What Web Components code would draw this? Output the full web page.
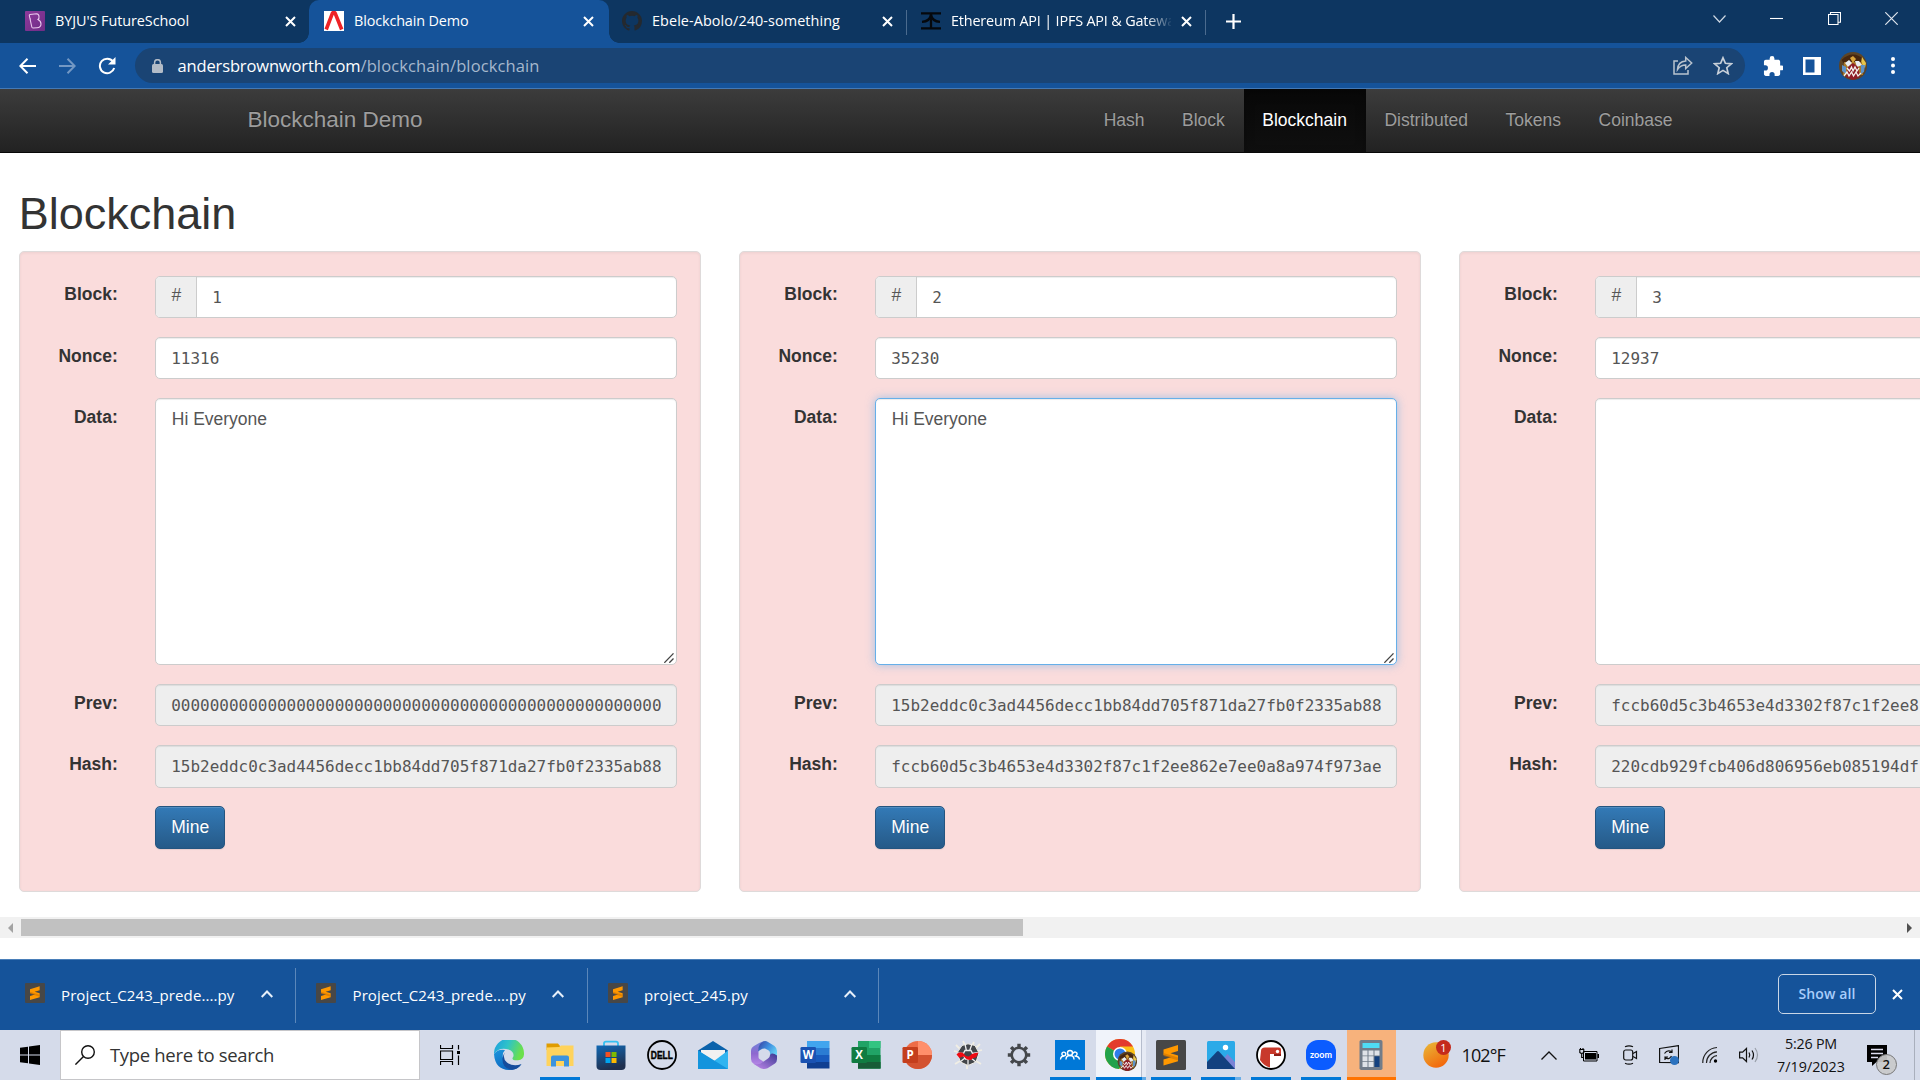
<!DOCTYPE html>
<html lang="en">
<head>
<meta charset="utf-8">
<title>Blockchain Demo</title>
<style>
html,body{margin:0;width:1920px;height:1080px;overflow:hidden;background:#fff}
body{font-family:"Liberation Sans",Arial,sans-serif;font-size:17.5px;color:#333}
</style>
</head>
<body>
<desktop-screen></desktop-screen>
<script>
const UI = '"Open Sans","Noto Sans",sans-serif';

function define(name, render) {
  customElements.define(name, class extends HTMLElement {
    connectedCallback() {
      if (this.shadowRoot) return;
      const root = this.attachShadow({ mode: 'open' });
      root.innerHTML = render(this);
    }
  });
}

/* Text run whose tracking is tuned so that it fills a given width. */
customElements.define('fit-text', class extends HTMLElement {
  connectedCallback() {
    if (this.shadowRoot) return;
    const root = this.attachShadow({ mode: 'open' });
    root.innerHTML = '<style>:host{display:block;white-space:nowrap;flex:none}span{display:inline-block}</style><span><slot></slot></span>';
    const w = parseFloat(this.getAttribute('w'));
    const span = root.querySelector('span');
    const n = this.textContent.length;
    if (w && n) {
      const natural = span.getBoundingClientRect().width;
      span.style.letterSpacing = ((w - natural) / n) + 'px';
      this.style.width = w + 'px';
    }
  }
});

const sublime = '<rect width="30" height="30" rx="1.5" fill="#474747"/><path d="M7.5 9.5 22 5v6l-7.500 2.300L22 15.500v5.800L7.500 25.500v-6l7.600-2.200-7.600-2.200z" fill="#ff9800"/><path d="M7.500 13 22 17.500v3L7.500 16z" fill="#c96f00" opacity=".55"/>';
const face = '<g><circle cx="14" cy="14" r="14" fill="#5d4426"/><path d="M2.500 8Q14-3 25.500 8l-2 3h-19z" fill="#46260f"/><path d="M23 5l4 6-1 5-4-5z" fill="#e8c64b"/><path d="M5 10h18l1 13H4z" fill="#a8792c"/><path d="M6 11l4-3 3 3-4 4zM16 9l4 0 3 4-5 2z" fill="#e9eef4"/><path d="M11 6l3-2 3 3-3 4z" fill="#d9a43b"/><path d="M3 13l4 2 0 7-4-3zM22 13l4 0-1 7-3 2z" fill="#5d93cc"/><path d="M9 15l5-4 5 4 2 10-7 3-7-3z" fill="#8e1d28"/><path d="M8 16l2.500 3 2-4 1.500 4 2-4 2 4 2-3M5 24l3-4 2 4 2.500-4 2 4 2.500-4 2 4 3-3" stroke="#f4f2ee" stroke-width="1.300" fill="none"/></g>';

/* name: [width, height, viewBox, markup] */
const ICONS = {
  byju:[20,20,'0 0 20 20','<defs><linearGradient id="a" x2="1" y2="1"><stop stop-color="#8d3a9b"/><stop offset="1" stop-color="#6f2c86"/></linearGradient></defs><rect width="20" height="20" rx="1" fill="url(#a)"/><path d="M4.300 4.500Q4.200 3.600 5 3.500L11.500 2.700Q14 3 14 5.500 14.300 7.500 13 8.500 16 10 16 13q0 3.500-4 3.700L8 17Q7 17 6.800 16zM6 8l-1 .2" fill="none" stroke="#e9c9ee" stroke-width="1.100"/>'],
  anders:[20,20,'0 0 20 20','<rect width="20" height="20" fill="#fff"/><path d="M2.200 18.500 8.300 2.500Q9.800.2 11.300 2.500L17.700 18.500" fill="none" stroke="#ee2226" stroke-width="3.600"/>'],
  github:[20,20,'0 0 16 16','<path fill="#24292f" d="M8 0C3.580 0 0 3.580 0 8c0 3.540 2.290 6.530 5.470 7.590.4.070.55-.17.55-.38 0-.19-.01-.82-.01-1.490-2.010.37-2.530-.49-2.690-.94-.09-.23-.48-.94-.82-1.130-.28-.15-.68-.52-.01-.53.63-.01 1.080.58 1.230.82.72 1.210 1.870.87 2.330.66.07-.52.28-.87.51-1.070-1.780-.2-3.640-.89-3.640-3.950 0-.87.31-1.590.82-2.150-.08-.2-.36-1.020.08-2.120 0 0 .67-.21 2.200.82a7.600 7.600 0 0 1 4 0c1.530-1.040 2.200-.82 2.200-.82.44 1.100.16 1.920.08 2.120.51.56.82 1.270.82 2.150 0 3.070-1.870 3.750-3.650 3.950.29.25.54.73.54 1.480 0 1.070-.01 1.930-.01 2.200 0 .21.15.46.55.38A8 8 0 0 0 16 8c0-4.420-3.580-8-8-8z"/>'],
  alchemy:[20,20,'0 0 20 20','<path d="M0 2.300h20M0 17.300h20M10 2.500V17M1 10.800Q9 10.500 10 3.500Q11 10.500 19 10.800" fill="none" stroke="#05080c" stroke-width="2.300"/>'],
  x:[11,11,'0 0 11 11','<path d="M1 1l9 9M10 1l-9 9" stroke="#fff" stroke-width="2"/>'],
  plus:[15,15,'0 0 15 15','<path d="M7.500 0v15M0 7.500h15" stroke="#fff" stroke-width="2.200"/>'],
  tabmenu:[13,8,'0 0 13 8','<path d="M.5.5l6 6.500 6-6.500" stroke="#cdd7e2" stroke-width="1.200" fill="none"/>'],
  min:[13,13,'0 0 13 13','<path d="M0 6.500h13" stroke="#fff" stroke-width="1.100"/>'],
  restore:[13,13,'0 0 13 13','<path d="M.5 2.500h9.500v10H.5zM2.500 2.500V.5h10v9.700H10" stroke="#fff" stroke-width="1.100" fill="none"/>'],
  winx:[13,13,'0 0 13 13','<path d="M.3.3l12.400 12.400M12.700.3.3 12.700" stroke="#dfe6ee" stroke-width="1.200"/>'],
  back:[17,16,'0 0 17 16','<path d="M17 8H1.500M8.500.8 1.300 8l7.200 7.200" stroke="#fff" stroke-width="2" fill="none"/>'],
  fwd:[17,16,'0 0 17 16','<path d="M0 8h15.500M8.500.8 15.700 8l-7.200 7.200" stroke="#7398c4" stroke-width="2" fill="none"/>'],
  reload:[18,18,'0 0 18 18','<path d="M15 4.500A7.300 7.300 0 1 0 16.200 11" stroke="#fff" stroke-width="2" fill="none"/><path d="M17.500 0v7.500h-7.500z" fill="#fff"/>'],
  lock:[11,14,'0 0 11 14','<rect y="5" width="11" height="9" rx="1.500" fill="#b3bcc7"/><path d="M2.600 6V3.600a2.900 2.900 0 0 1 5.800 0V6" fill="none" stroke="#b3bcc7" stroke-width="1.500"/>'],
  share:[20,19,'0 0 20 19','<path d="M5 5H1v13h14v-4" fill="none" stroke="#b9c3ce" stroke-width="1.500"/><path d="M4.500 13.500Q5 5.500 12.700 5V1.500L18.700 7l-6 5.500V9Q7.500 9 4.500 13.500z" fill="none" stroke="#b9c3ce" stroke-width="1.500"/>'],
  star:[20,19,'0 0 20 19','<path d="M10 1.800l2.400 5.500 5.900.5-4.500 3.900 1.400 5.900-5.200-3.200-5.200 3.200 1.400-5.900-4.500-3.900 5.900-.5z" fill="none" stroke="#c8d0d9" stroke-width="1.700"/>'],
  puzzle:[20,20,'1 1 21 21','<path fill="#fff" d="M20.500 11H19V7c0-1.100-.9-2-2-2h-4V3.500a2.500 2.500 0 0 0-5 0V5H4c-1.100 0-2 .9-2 2v3.800h1.500a2.700 2.700 0 0 1 0 5.400H2V20c0 1.100.9 2 2 2h3.800v-1.500a2.700 2.700 0 0 1 5.400 0V22H17c1.100 0 2-.9 2-2v-4h1.500a2.500 2.500 0 0 0 0-5z"/>'],
  panel:[18,18,'0 0 18 18','<path fill="#fff" fill-rule="evenodd" d="M0 0h18v18H0zM2.500 2.500v13h9v-13z"/>'],
  avatar:[28,28,'0 0 28 28',face],
  dots:[4,17,'0 0 4 17','<circle cx="2" cy="2" r="2" fill="#fff"/><circle cx="2" cy="8.500" r="2" fill="#fff"/><circle cx="2" cy="15" r="2" fill="#fff"/>'],
  grip:[10,10,'0 0 10 10','<path d="M.3 9.800 9.500.4M5.300 9.800l4.200-4.300" stroke="#444" stroke-width="1.300"/>'],
  sleft:[5,10,'0 0 5 10','<path d="M5 0v10L0 5z" fill="#a3a3a3"/>'],
  sright:[5,10,'0 0 5 10','<path d="M0 0v10l5-5z" fill="#505050"/>'],
  sublS:[20,20,'0 0 30 30',sublime],
  up:[12,8,'0 0 12 8','<path d="M.7 7 6 1.500 11.300 7" stroke="#e6effa" stroke-width="2" fill="none"/>'],
  start:[20,20,'0 0 20 20','<path d="M0 2.800 8 1.700V9.500H0zM9 1.500 20 0v9.500H9zM0 10.500h8v7.800L0 17.200zM9 10.500h11V20L9 18.500z" fill="#000"/>'],
  search:[20,20,'0 0 20 20','<circle cx="13" cy="7" r="6.300" fill="none" stroke="#111" stroke-width="1.400"/><path d="M8.500 11.500.4 19.600" stroke="#111" stroke-width="1.400"/>'],
  taskview:[20,20,'0 0 20 20','<path d="M.5 0v3.500h12V0M.5 20v-3.500h12V20M.5 6h12v8.500H.5zM18.500 0v4.500M18.500 10.500V20" fill="none" stroke="#000" stroke-width="1.200"/><rect x="17" y="6" width="3" height="3"/>'],
  edge:[30,30,'0 0 30 30','<defs><linearGradient id="a" x2="1" y2=".3"><stop stop-color="#1b9de2"/><stop offset=".5" stop-color="#2fc3c8"/><stop offset="1" stop-color="#6be04c"/></linearGradient><linearGradient id="b" x2=".6" y2="1"><stop stop-color="#1c96dd"/><stop offset="1" stop-color="#0b62bd"/></linearGradient></defs><path d="M0 14A15 15 0 0 1 30 13q.4 6.500-6 7.300-6 .3-5.500-2.300c2-2 1.500-7-4-8.500Q5 7 0 14z" fill="url(#a)"/><path d="M0 14Q4 8.500 11 10q-3 3-2 8 2 7.500 9 9.500 5 1 9.500-3Q23 30 15 30 1 29.500 0 14z" fill="url(#b)"/><path d="M11 12.500Q8 18 13 22.500q6 4.500 14.500 1.500-4 6-10 5.700Q8 28 8.500 18.500q.5-4 2.500-6z" fill="#154c9c"/>'],
  folder:[30,30,'0 0 30 30','<path d="M1.500 3.500h11.500l2 2.500v4H1.500z" fill="#e09c00"/><path d="M1.500 7.500 14 7l2-1.500h12.500V26h-27z" fill="#ffd35c"/><path d="M6 26.500V17.500q0-2 2-2h14q2 0 2 2v9h-5V21h-8v5.500z" fill="#3d93dd"/>'],
  store:[30,30,'0 0 30 30','<defs><linearGradient id="a" x2=".3" y2="1"><stop stop-color="#1068b4"/><stop offset="1" stop-color="#20304f"/></linearGradient></defs><path d="M8 6V3.500Q8 1.700 10 1.700h10q2 0 2 1.800V6" fill="none" stroke="#35c1f1" stroke-width="1.800"/><path d="M.5 5.500h29V26q0 4-4 4h-21q-4 0-4-4z" fill="url(#a)"/><path d="M9.500 12h5v5h-5z" fill="#f25022"/><path d="M15.500 12h5v5h-5z" fill="#7fba00"/><path d="M9.500 18h5v5h-5z" fill="#00a4ef"/><path d="M15.500 18h5v5h-5z" fill="#ffb900"/>'],
  dell:[30,30,'0 0 30 30','<circle cx="15" cy="15" r="14" fill="none" stroke="#000" stroke-width="1.800"/><text x="3.800" y="18.700" font-family="Liberation Sans" font-weight="700" font-size="10" textLength="22" lengthAdjust="spacingAndGlyphs" stroke="#000" stroke-width=".4">DELL</text>'],
  mail:[30,30,'0 0 30 30','<path d="M0 10.500 15 1l15 9.500V20H0z" fill="#0b62ab"/><path d="M3 10h24v10H3z" fill="#f1f1f1"/><path d="M0 10.500 16 21 30 10.500V29H0z" fill="#2fb4f0"/><path d="M0 10.500 30 29H0z" fill="#1394dd"/>'],
  m365:[30,30,'0 0 30 30','<defs><linearGradient id="a" x2="1" y2=".7"><stop stop-color="#3a3f9e"/><stop offset=".5" stop-color="#3f8fe0"/><stop offset="1" stop-color="#6ddcf8"/></linearGradient><linearGradient id="b" x2="0" y2="1"><stop stop-color="#6f86dc"/><stop offset=".5" stop-color="#8e68cf"/><stop offset="1" stop-color="#b98be8"/></linearGradient><linearGradient id="c" x1="1" x2="0" y2="1"><stop stop-color="#3b3a94"/><stop offset="1" stop-color="#c78bee"/></linearGradient></defs><path d="M15 1Q9 3 5 6q-3 1.500-3 5v8q0 3 2.500 4.500l4.500 2.500q5 0 6-4l-4.500-3q-1-.7-1-2v-6Q10 5 15 1z" fill="url(#b)"/><path d="M11 4q4-4.500 8-2l6.500 4Q28 8 28 11v9.500L21 17v-4q0-2-2-3l-3-1.500q-2-.5-4 1l-3 2Q9 7 11 4z" fill="url(#a)"/><path d="M28 15.500V19q0 3-2 4.500l-7.500 4.700q-3.500 1.600-7 0L4 23.500q6 2 10-1.500l5-3.500q2-1.300 2-3.500 2-3 7 .5z" fill="url(#c)"/>'],
  word:[30,30,'0 0 30 30','<path d="M7 1h22.500v7.500H7z" fill="#41a5ee"/><path d="M7 8h22.500v7H7z" fill="#2b7cd3"/><path d="M7 15h22.500v7H7z" fill="#185abd"/><path d="M7 22h22.500v6.500H7z" fill="#103f91"/><rect x=".5" y="7" width="15.500" height="16" rx="1.300" fill="#1a52b2"/><text x="8.200" y="19" text-anchor="middle" font-family="Open Sans" font-weight="700" font-size="11.500" fill="#fff">W</text>'],
  excel:[30,30,'0 0 30 30','<path d="M7 1h22.500v27.500H7z" fill="#21a366"/><path d="M18 1h11.500v7H18z" fill="#33c481"/><path d="M7 15h22.500v13.500H7z" fill="#107c41"/><path d="M18 22h11.500v6.500H7V22z" fill="#185c37"/><rect x=".5" y="7" width="15.500" height="16" rx="1.300" fill="#107c41"/><text x="8.200" y="19" text-anchor="middle" font-family="Open Sans" font-weight="700" font-size="11.500" fill="#fff">X</text>'],
  ppt:[30,30,'0 0 30 30','<circle cx="16" cy="15" r="14" fill="#ed6c47"/><path d="M16 1a14 14 0 0 1 14 14H16z" fill="#ff8f6b"/><path d="M2 15h28a14 14 0 0 1-28 0z" fill="#d35230"/><rect x=".5" y="7" width="15.500" height="16" rx="1.300" fill="#c43e1c"/><text x="8.200" y="19" text-anchor="middle" font-family="Open Sans" font-weight="700" font-size="11.500" fill="#fff">P</text>'],
  spider:[30,30,'0 0 30 30','<path d="M10 1l2 4M21 2l-2 4M1 11l4 1M29 10l-4 1M2 24l5-3M28 24l-5-3M14 29v-5M3 5l4 4M27 4l-4 4" stroke="#f1eee4" stroke-width="1.800"/><path d="M9 5.500 15 3.800l7 1.700L26 13l-3 9-8 3.500L7.500 22 4 13z" fill="#43464a" stroke="#eceae4" stroke-width="1"/><path d="M12 4l1.500 7M19 4l-2.500 7M4.500 13l6 .5M26 12.500l-7 1M7 22l5-4M23 22l-5-4M15 25v-6M12 10.500h6l2 4-2.500 4.500h-5L10 14.500z" stroke="#eee" stroke-width="1.300" fill="none"/><path d="M3.500 14.500q3-3.500 6.500-1.500 3 4 6 3.500 3-3.500 6-3.500l3.500-.5-2.500 5q-3-.5-5 2.500-4 .5-7-3.500-3 0-4.500 1.500z" fill="#f00a12"/>'],
  gear:[30,30,'0 0 30 30','<circle cx="15" cy="15" r="7.300" fill="none" stroke="#44474b" stroke-width="2.600"/><g stroke="#44474b" stroke-width="3.400"><path d="M15 3.800v3.500M15 22.700v3.500M3.800 15h3.500M22.700 15h3.500"/><path transform="rotate(45 15 15)" d="M15 3.800v3.500M15 22.700v3.500M3.800 15h3.500M22.700 15h3.500"/></g>'],
  people:[30,30,'0 0 30 30','<rect width="30" height="30" fill="#0078d7"/><g fill="none" stroke="#fff" stroke-width="1.400"><circle cx="15" cy="13" r="2.500"/><path d="M11 19.500q0-4 4-4t4 4"/><circle cx="8.800" cy="14" r="1.900"/><path d="M5.500 19.500q.3-3.500 3.500-3.500M18 13.500q1-2 2.700-1.300 2.500 1 .5 3.800M19.500 16q4.500 0 5 3.500"/></g>'],
  chrome:[32,32,'0 0 32 32','<circle cx="15" cy="15" r="15" fill="#fbc116"/><path d="M15 15 2 7.500A15 15 0 0 1 28 7.500H15z" fill="#e33b2e"/><path d="M15 15l-13-7.500A15 15 0 0 0 14 30l7-12z" fill="#22a24b"/><circle cx="15" cy="15" r="7" fill="#fff"/><circle cx="15" cy="15" r="5.500" fill="#2f7de9"/><g transform="translate(12.500 12.500) scale(.7)">'+face+'</g>'],
  sublL:[30,30,'0 0 30 30',sublime],
  photos:[30,30,'0 0 30 30','<rect x="1" y="1" width="28" height="28" rx="1.500" fill="#2baae8"/><path d="M13 24 21.500 14l7.500 8v7H13z" fill="#7a83d6"/><path d="M1 22 11 11.500q1-.8 2 0L29 29H1z" fill="#13417f"/><circle cx="19.500" cy="7.500" r="2.700" fill="#fff"/>'],
  redp:[30,30,'0 0 30 30','<circle cx="15" cy="15" r="14" fill="#fff" stroke="#000" stroke-width="1.800"/><path d="M5 11q0-3.500 4-3.500h14q2 0 2 2V14H14v13.500Q8 26 4 20z" fill="#c8392b"/><circle cx="21.500" cy="11.500" r="1.700" fill="#fff"/><path d="M18 14h7v2h-7z" fill="#8d1e17"/>'],
  zoom:[30,30,'0 0 30 30','<rect width="30" height="30" rx="12" fill="#0b5cff"/><text x="4" y="18" font-family="Lato" font-weight="700" font-size="10" textLength="22" lengthAdjust="spacingAndGlyphs" fill="#fff">zoom</text>'],
  calc:[30,30,'0 0 30 30','<rect x="3.500" width="23" height="30" rx="1.800" fill="#717c89"/><rect x="6.500" y="3" width="17" height="5" fill="#4fdcf5"/><g fill="#dfe3e8"><path d="M6.500 10.500h5v5h-5zM12.500 10.500h5v5h-5zM18.500 10.500h5v5h-5zM6.500 16.300h5v5h-5zM12.500 16.300h5v5h-5zM6.500 22h5v5h-5zM12.500 22h5v5h-5z"/></g><path d="M18.500 16.300h5V27h-5z" fill="#13417f"/>'],
  weather:[30,30,'0 0 30 30','<defs><linearGradient id="a" x2=".6" y2="1"><stop stop-color="#e8bb3a"/><stop offset="1" stop-color="#f3680c"/></linearGradient></defs><circle cx="13" cy="15" r="12.700" fill="url(#a)"/><circle cx="20.500" cy="7.500" r="7.500" fill="#c42b1c"/><text x="20.500" y="11.500" text-anchor="middle" font-family="Open Sans" font-size="11" fill="#fff">1</text>'],
  tup:[16,9,'0 0 16 9','<path d="M.5 8.500 8 1l7.500 7.500" fill="none" stroke="#111" stroke-width="1.300"/>'],
  battery:[20,14,'0 0 20 14','<path d="M4.500 3.500H18V13H4.500z" fill="none" stroke="#000"/><path d="M6 5h11v6.500H6zM18.500 6H20v4h-1.500z"/><path d="M.8 1.500h4v3q-2 2-4 0zM1.500 0v2M4 0v2M2.700 5v4.500h2" fill="none" stroke="#000" stroke-width="1.100"/>'],
  camera:[15,20,'0 0 15 20','<rect x=".7" y="5" width="9" height="10" rx="2" fill="none" stroke="#111" stroke-width="1.200"/><path d="M10 8.500 13.500 6.500v7L10 11.500M2 1.800q4-2 8 0M2 18.200q4 2 8 0" fill="none" stroke="#111" stroke-width="1.200"/>'],
  sync:[20,20,'0 0 20 20','<path d="M.6 3.500 19.500.6v17L.6 17.500z" fill="none" stroke="#111" stroke-width="1.200"/><path d="M5.500 8.500q3-4.500 7.500-1.500V4.500M13.500 7.500H10M12.500 11q-2.500 4.500-6.500 1.500V15M5.700 12H9" fill="none" stroke="#111" stroke-width="1.200"/><circle cx="15.500" cy="15.500" r="4.500" fill="#2b72bf"/>'],
  wifi:[16,18,'0 0 16 18','<path d="M.8 17A15 15 0 0 1 15 1.500M4.500 17A11 11 0 0 1 15 5.800M8 17a7.500 7.500 0 0 1 7-7.300" fill="none" stroke="#222" stroke-width="1.200"/><circle cx="13.500" cy="15" r="1.700"/>'],
  sound:[21,16,'0 0 21 16','<path d="M.6 5.200h3L7.500 1.500v13L3.600 10.800h-3z" fill="none" stroke="#111" stroke-width="1.200"/><path d="M10 5.500q1.500 2.500 0 5M13 3.500q3 4.500 0 9" fill="none" stroke="#111" stroke-width="1.200"/><path d="M16 1q5 7 0 14" fill="none" stroke="#999fa9" stroke-width="1.200"/>'],
  notif:[31,31,'0 0 31 31','<path d="M0 0h20v17H9.500L5 21v-4H0z"/><path d="M4 4.500h12M4 8.500h12M4 12.500h7" stroke="#dde" stroke-width="1.300"/><circle cx="19.500" cy="19.500" r="10" fill="#c9c9ca" fill-opacity=".93" stroke="#777" stroke-width="1"/><text x="19.300" y="24.300" text-anchor="middle" font-family="Open Sans" font-weight="600" font-size="13" fill="#111">2</text>']
};

define('ui-icon', el => {
  const [w, h, vb, body] = ICONS[el.getAttribute('name')];
  return `<style>:host{display:block;flex:none;width:${w}px;height:${h}px}svg{display:block}</style><svg width="${w}" height="${h}" viewBox="${vb}">${body}</svg>`;
});

define('browser-tab', el => `<style>
:host{display:flex;align-items:center;box-sizing:border-box;height:43px;flex:none;width:${el.getAttribute('width')}px;padding:0 ${el.getAttribute('pr')}px 1px ${el.getAttribute('pl')}px;gap:10px;color:#fff;font:14.400px/20px ${UI}}
:host([active]){background:#15539a;border-radius:10px 10px 0 0}
:host([line]){background:linear-gradient(#4b6b8e,#4b6b8e) right 10px/1px 25px no-repeat}
.t{flex:1;min-width:0;overflow:hidden}
:host([fade]) .t{-webkit-mask:linear-gradient(90deg,#000 195px,transparent 222px)}
</style><ui-icon name="${el.getAttribute('icon')}"></ui-icon><div class="t"><slot></slot></div><ui-icon name="x"></ui-icon>`);

define('tab-strip', () => `<style>
:host{display:flex;height:43px;background:#0d3661;align-items:flex-start;color:#fff}
.curveL,.curveR{width:10px;height:10px;margin-top:33px;flex:none}
.curveL{margin-left:-10px;background:radial-gradient(circle at 0 0,#0d3661 9.500px,#15539a 10px)}
.curveR{margin-right:-10px;z-index:1;background:radial-gradient(circle at 100% 0,#0d3661 9.500px,#15539a 10px)}
.plus{margin:14px 0 0 20px}
.win{margin-left:auto;display:flex;gap:44.500px;padding:12px 22px 0 0;align-items:center}
</style>
<browser-tab width="309" pl="25" pr="13" icon="byju"><fit-text w="134">BYJU'S FutureSchool</fit-text></browser-tab>
<div class="curveL"></div>
<browser-tab active width="300" pl="15" pr="15" icon="anders"><fit-text w="114.500">Blockchain Demo</fit-text></browser-tab>
<div class="curveR"></div>
<browser-tab line width="298" pl="13" pr="14" icon="github"><fit-text w="188">Ebele-Abolo/240-something</fit-text></browser-tab>
<browser-tab line fade width="299" pl="14" pr="14" icon="alchemy"><fit-text w="224">Ethereum API | IPFS API &amp; Gatewa</fit-text></browser-tab>
<ui-icon class="plus" name="plus"></ui-icon>
<div class="win"><ui-icon name="tabmenu"></ui-icon><ui-icon name="min"></ui-icon><ui-icon name="restore"></ui-icon><ui-icon name="winx"></ui-icon></div>`);

define('tool-bar', () => `<style>
:host{display:flex;box-sizing:border-box;height:46px;background:#15539a;border-bottom:1px solid #4479b5;align-items:center;padding:0 25px 0 19px}
.nav{display:flex;gap:22.500px;align-items:center;width:116px}
.omni{display:flex;flex:1;height:35px;border-radius:18px;background:#1a4474;align-items:center;padding:0 12px 0 17px;box-sizing:border-box;font:16.500px/24px ${UI};color:#fff}
.url{display:flex;margin:1px auto 0 14.500px}.path{color:#a6b8cd}
.star{margin-left:20px}
.ext{display:flex;align-items:center;margin-left:18px}
.ext>*+*{margin-left:20.500px}.ext>:nth-child(3){margin-left:18px}.ext>:nth-child(4){margin-left:24px}
</style>
<div class="nav"><ui-icon name="back"></ui-icon><ui-icon name="fwd"></ui-icon><ui-icon name="reload"></ui-icon></div>
<div class="omni"><ui-icon name="lock"></ui-icon><div class="url"><fit-text w="183">andersbrownworth.com</fit-text><fit-text class="path" w="179">/blockchain/blockchain</fit-text></div><ui-icon name="share"></ui-icon><ui-icon class="star" name="star"></ui-icon></div>
<div class="ext"><ui-icon name="puzzle"></ui-icon><ui-icon name="panel"></ui-icon><ui-icon name="avatar"></ui-icon><ui-icon name="dots"></ui-icon></div>`);

define('site-nav', () => `<style>
:host{display:flex;box-sizing:border-box;height:64px;background:linear-gradient(#3c3c3c,#222);border-bottom:1px solid #080808;padding:0 228.750px;justify-content:space-between;color:#9d9d9d;text-shadow:0 -1px 0 rgba(0,0,0,.25);line-height:25px}
.brand{font-size:22.500px;padding:18px 18.750px}
nav{display:flex}
nav span{padding:18.500px 18.750px 0}
nav .on{color:#fff;background:linear-gradient(#080808,#0f0f0f);box-shadow:inset 0 4px 11px rgba(0,0,0,.25)}
</style><div class="brand">Blockchain Demo</div><nav><span>Hash</span><span>Block</span><span class="on">Blockchain</span><span>Distributed</span><span>Tokens</span><span>Coinbase</span></nav>`);

define('form-row', el => `<style>
:host{display:flex;margin-bottom:18.750px}
label{flex:none;width:74px;text-align:right;font-weight:700;line-height:25px;padding:6.900px 37.500px 0 0}
.c{flex:1;min-width:0}
</style><label>${el.getAttribute('label') || ''}</label><div class="c"><slot></slot></div>`);

define('text-field', el => `<style>
:host{display:flex;box-sizing:border-box;height:42.500px;border:1px solid #ccc;border-radius:5px;background:#fff;color:#555;overflow:hidden;line-height:25px;box-shadow:inset 0 1px 1px rgba(0,0,0,.075)}
:host([readonly]){background:#eee}
.addon{width:41px;flex:none;box-sizing:border-box;background:#eee;border-right:1px solid #ccc;text-align:center;padding-top:6.400px}
.v{flex:1;min-width:0;margin:8.400px 15px 0;overflow:hidden;white-space:nowrap;font:15.980px/25px "DejaVu Sans Mono",monospace}
</style>${el.hasAttribute('addon') ? '<div class="addon">#</div>' : ''}<div class="v"><slot></slot></div>`);

define('text-box', () => `<style>
:host{display:flex;justify-content:space-between;align-items:flex-end;box-sizing:border-box;height:267px;border:1px solid #ccc;border-radius:5px;background:#fff;color:#555;line-height:25px;padding:7.900px 2px 1px 15.500px;box-shadow:inset 0 1px 1px rgba(0,0,0,.075)}
:host([focused]){border-color:#66afe9;box-shadow:inset 0 1px 1px rgba(0,0,0,.075),0 0 10px rgba(102,175,233,.6)}
div{align-self:flex-start}
</style><div><slot></slot></div><ui-icon name="grip"></ui-icon>`);

define('mine-button', () => `<style>
:host{display:block;box-sizing:border-box;width:70px;height:42.500px;border:1px solid #245580;border-radius:5px;background:linear-gradient(#337ab7,#265a88);box-shadow:inset 0 1px 0 rgba(255,255,255,.15),0 1px 1px rgba(0,0,0,.075);color:#fff;text-align:center;text-shadow:0 -1px 0 rgba(0,0,0,.2);line-height:25px;padding-top:7.600px}
</style><slot></slot>`);

define('block-card', el => {
  const a = n => el.getAttribute(n);
  return `<style>
:host{display:block;box-sizing:border-box;flex:none;width:682.500px;height:641px;border:1px solid #dedada;border-radius:5px;background:#fadcdc;box-shadow:inset 0 1px 3px rgba(0,0,0,.06);padding:23.600px 23px 0 24px}
</style>
<form-row label="Block:"><text-field addon>${a('number')}</text-field></form-row>
<form-row label="Nonce:"><text-field>${a('nonce')}</text-field></form-row>
<form-row label="Data:"><text-box ${el.hasAttribute('focused') ? 'focused' : ''}>${a('data')}</text-box></form-row>
<form-row label="Prev:"><text-field readonly>${a('prev')}</text-field></form-row>
<form-row label="Hash:"><text-field readonly>${a('hash')}</text-field></form-row>
<form-row><mine-button>Mine</mine-button></form-row>`;
});

define('scroll-bar', () => `<style>
:host{display:flex;height:21px;background:#f1f1f1;align-items:center;padding:0 8px}
.th{width:1002px;height:17px;background:#c1c1c1;margin:0 auto 0 8px}
</style><ui-icon name="sleft"></ui-icon><div class="th"></div><ui-icon name="sright"></ui-icon>`);

define('web-page', () => `<style>
:host{display:flex;flex-direction:column;height:806px;background:#fff}
h1{margin:0;padding:36px 0 0 18.750px;height:62px;font-size:45px;line-height:49.500px;font-weight:400}
.row{display:flex;gap:37.500px;padding-left:18.750px;height:666px;overflow:hidden}
</style><h1>Blockchain</h1>
<div class="row">
<block-card number="1" nonce="11316" data="Hi Everyone" prev="${'0'.repeat(51)}" hash="15b2eddc0c3ad4456decc1bb84dd705f871da27fb0f2335ab88"></block-card>
<block-card focused number="2" nonce="35230" data="Hi Everyone" prev="15b2eddc0c3ad4456decc1bb84dd705f871da27fb0f2335ab88" hash="fccb60d5c3b4653e4d3302f87c1f2ee862e7ee0a8a974f973ae"></block-card>
<block-card number="3" nonce="12937" data="" prev="fccb60d5c3b4653e4d3302f87c1f2ee8" hash="220cdb929fcb406d806956eb085194df"></block-card>
</div><scroll-bar></scroll-bar>`);

define('download-item', el => `<style>
:host{display:flex;align-items:center;box-sizing:border-box;flex:none;width:291.500px;height:55px;padding:0 22.500px 5px 20px;border-right:1.500px solid #5b87ba;color:#fff;font:15px/20px ${UI}}
.t{margin:3px auto 0 16.500px}
.u{margin-top:2px}
</style><ui-icon name="sublS"></ui-icon><div class="t"><slot></slot></div><ui-icon class="u" name="up"></ui-icon>`);

define('download-bar', () => `<style>
:host{display:flex;box-sizing:border-box;height:71px;border-top:1px solid #4a7fb9;background:#15539a;padding:8px 17px 0 4.500px}
.all{box-sizing:border-box;width:98px;height:40px;border:1px solid #c9d6e6;border-radius:5px;margin:6px 16px 0 auto;color:#a9cdfb;font:600 14px/37px ${UI};display:flex;justify-content:center}
.x{margin-top:21px}
</style><download-item><fit-text w="173.500">Project_C243_prede....py</fit-text></download-item><download-item><fit-text w="173.500">Project_C243_prede....py</fit-text></download-item><download-item><fit-text w="104">project_245.py</fit-text></download-item>
<div class="all"><fit-text w="57">Show all</fit-text></div><ui-icon class="x" name="x"></ui-icon>`);

define('task-item', el => {
  const w = el.getAttribute('w') || 51, u = el.getAttribute('line');
  return `<style>:host{display:flex;flex:none;box-sizing:border-box;width:${w}px;height:50px;align-items:center;justify-content:center;${u ? `background:linear-gradient(${u},${u}) center bottom/40px 3px no-repeat` : ''}}
:host([chrome]){background:linear-gradient(#0078d7,#0078d7) 0 100%/46px 3px no-repeat,linear-gradient(#5fa9e6,#5fa9e6) 46px 100%/4px 3px no-repeat,linear-gradient(90deg,#f0f3fa 45px,#b6bdcd 45px 46px,#e6eaf4 46px)}
:host([photos]){background:linear-gradient(90deg,#0078d7 34px,#6aaee8 34px) center bottom/40px 3px no-repeat}
:host([calc]){background:linear-gradient(#ff7300,#ff7300) 1px 100%/49px 3px no-repeat,linear-gradient(90deg,transparent 1px,#f7b27c 1px)}
</style><ui-icon name="${el.getAttribute('icon')}"></ui-icon>`;
});

define('task-bar', () => {
  const plain = ['edge','folder*','store','dell','mail','m365','word','excel','ppt','spider','gear','people*'];
  return `<style>
:host{display:flex;height:50px;background:#d5dbea;color:#111;font-family:${UI};align-items:center}
.s{margin-left:20px}
.box{display:flex;align-items:center;box-sizing:border-box;width:360px;height:50px;margin-left:20px;border:1px solid #c6c6c9;background:#fff;padding-left:14px;gap:15px;font-size:18.500px;line-height:26px;color:#333}
.tv{margin:0 23px 0 20px}
.tray{display:flex;align-items:center;margin-left:26.500px;flex:1}
.tmp{font-size:18px;line-height:26px;margin-left:9px}
.clock{width:90px;display:flex;flex-direction:column;align-items:center;font-size:14.300px;line-height:23px;margin-left:6px}
.n{margin:10px 0 0 11px}
.end{width:1px;height:50px;background:#a9afbc;margin:0 5px 0 auto}
</style>
<ui-icon class="s" name="start"></ui-icon>
<div class="box"><ui-icon name="search"></ui-icon><fit-text w="164">Type here to search</fit-text></div>
<ui-icon class="tv" name="taskview"></ui-icon>
${plain.map(n => `<task-item ${n === 'people*' ? 'w="52"' : ''} icon="${n.replace('*','')}" ${n.endsWith('*') ? 'line="#0078d7"' : ''}></task-item>`).join('')}
<task-item w="50" icon="chrome" chrome></task-item>
<task-item w="50" icon="sublL" line="#0078d7"></task-item>
<task-item w="50" icon="photos" photos></task-item>
<task-item w="50" icon="redp" line="#0078d7"></task-item>
<task-item w="50" icon="zoom" line="#0078d7"></task-item>
<task-item w="50" icon="calc" calc></task-item>
<div class="tray"><ui-icon name="weather"></ui-icon><fit-text class="tmp" w="43.500">102°F</fit-text>
<ui-icon name="tup" style="margin-left:36px"></ui-icon><ui-icon name="battery" style="margin-left:22px"></ui-icon><ui-icon name="camera" style="margin-left:24px"></ui-icon><ui-icon name="sync" style="margin-left:21px"></ui-icon><ui-icon name="wifi" style="margin-left:23px"></ui-icon><ui-icon name="sound" style="margin-left:21px"></ui-icon>
<div class="clock"><fit-text w="52">5:26 PM</fit-text><fit-text w="68">7/19/2023</fit-text></div><ui-icon class="n" name="notif"></ui-icon><div class="end"></div></div>`;
});

define('desktop-screen', () => `<style>:host{display:flex;flex-direction:column;width:1920px;height:1080px;overflow:hidden}</style>
<tab-strip></tab-strip><tool-bar></tool-bar><site-nav></site-nav><web-page></web-page><download-bar></download-bar><task-bar></task-bar>`);
</script>
</body>
</html>
